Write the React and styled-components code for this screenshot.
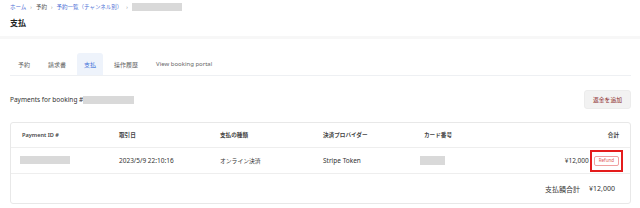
import React from 'react';
import styled, { createGlobalStyle } from 'styled-components';

const GlobalStyle = createGlobalStyle`
  body {
    margin: 0;
    background: #fff;
    color: #333;
    font-family: "Noto Sans", "Noto Sans CJK JP", sans-serif;
    font-size: 6.5px;
  }
`;

const Header = styled.header`
  height: 39px;
  padding: 3px 10px 0;
  box-sizing: border-box;
  border-bottom: 3px solid #f7f7f7;
`;

const Crumbs = styled.nav`
  display: flex;
  align-items: center;
  gap: 4px;
  height: 8px;
  font-size: 5.5px;
  color: #555;
`;

const Crumb = styled.a`
  color: ${p => (p.$link ? '#4f72d6' : '#555')};
  text-decoration: none;
`;

const Sep = styled.span`
  color: #888;
  font-size: 5px;
`;

const Masked = styled.span`
  display: inline-block;
  width: ${p => p.$w}px;
  height: ${p => p.$h || 8}px;
  background: #d9d9d9;
`;

const Title = styled.h1`
  margin: 7px 0 0;
  font-size: 8px;
  line-height: 10px;
  font-weight: 700;
  color: #222;
`;

const Main = styled.main`
  padding: 14px 9px 0 10px;
`;

const Tabs = styled.div`
  display: flex;
  gap: 4px;
  height: 22px;
  padding-left: 1px;
  border-bottom: 1px solid #eef0f3;
`;

const Tab = styled.div`
  display: flex;
  align-items: center;
  padding: 0 7px;
  font-size: 6px;
  color: ${p => (p.$active ? '#3a6fd8' : '#666')};
  background: ${p => (p.$active ? '#eef3fb' : 'transparent')};
  border-radius: 3px 3px 0 0;
`;

const Toolbar = styled.div`
  display: flex;
  align-items: center;
  justify-content: space-between;
  margin-top: 14px;
  height: 19px;
`;

const Heading = styled.div`
  display: flex;
  align-items: center;
  color: #333;
`;

const AddButton = styled.button`
  height: 19px;
  padding: 0 8px;
  border: 1px solid #ececec;
  border-radius: 3px;
  background: #f2f2f2;
  color: #8b2b2b;
  font-family: inherit;
  font-size: 5.8px;
`;

const Card = styled.div`
  margin-top: 13px;
  border: 1px solid #e8e8e8;
  border-radius: 3px;
`;

const Row = styled.div`
  display: grid;
  grid-template-columns: 97px 101px 103px 101px 1fr 40px;
  align-items: center;
  height: ${p => p.$h}px;
  padding: 0 11px;
  border-top: ${p => (p.$first ? 'none' : '1px solid #eeeeee')};
  color: ${p => (p.$head ? '#444' : '#333')};
  font-weight: ${p => (p.$head ? 600 : 400)};
  font-size: ${p => (p.$head ? '5.6px' : '6.5px')};
`;

const Cell = styled.div`
  text-align: ${p => (p.$right ? 'right' : 'left')};
  white-space: nowrap;
`;

const Jp = styled.span`
  font-size: 5.8px;
`;

const AmountCell = styled.div`
  grid-column: 5 / 7;
  display: flex;
  align-items: center;
  justify-content: flex-end;
`;

const Highlight = styled.span`
  display: inline-flex;
  align-items: center;
  margin-left: 1px;
  margin-right: -4px;
  padding: 6px 4px;
  outline: 2px solid #e41c1c;
  outline-offset: -2px;
`;

const RefundButton = styled.button`
  height: 10px;
  padding: 0 4px;
  border: 1px solid #f0a0a0;
  border-radius: 2px;
  background: #fff;
  color: #e05555;
  font-family: inherit;
  font-size: 4.5px;
  line-height: 1;
`;

const TotalCell = styled.div`
  grid-column: 1 / 7;
  display: flex;
  justify-content: flex-end;
  gap: 9px;
  padding-right: 4px;
  font-size: 7px;
`;

export default function App() {
  return (
    <>
      <GlobalStyle />
      <Header>
        <Crumbs>
          <Crumb $link href="#">ホーム</Crumb>
          <Sep>›</Sep>
          <Crumb>予約</Crumb>
          <Sep>›</Sep>
          <Crumb $link href="#">予約一覧（チャンネル別）</Crumb>
          <Sep>›</Sep>
          <Masked $w={50} />
        </Crumbs>
        <Title>支払</Title>
      </Header>
      <Main>
        <Tabs>
          <Tab>予約</Tab>
          <Tab>請求書</Tab>
          <Tab $active>支払</Tab>
          <Tab>操作履歴</Tab>
          <Tab>View booking portal</Tab>
        </Tabs>
        <Toolbar>
          <Heading>
            Payments for booking #<Masked $w={51} />
          </Heading>
          <AddButton>返金を追加</AddButton>
        </Toolbar>
        <Card>
          <Row $h={24} $first $head>
            <Cell>Payment ID #</Cell>
            <Cell>取引日</Cell>
            <Cell>支払の種類</Cell>
            <Cell>決済プロバイダー</Cell>
            <Cell>カード番号</Cell>
            <Cell $right>合計</Cell>
          </Row>
          <Row $h={25}>
            <Cell><Masked $w={50} style={{ marginLeft: -2 }} /></Cell>
            <Cell>2023/5/9 22:10:16</Cell>
            <Cell><Jp>オンライン決済</Jp></Cell>
            <Cell>Stripe Token</Cell>
            <AmountCell>
              <Masked $w={25} $h={9} style={{ marginRight: 'auto', marginLeft: -4 }} />
              ¥12,000
              <Highlight>
                <RefundButton>Refund</RefundButton>
              </Highlight>
            </AmountCell>
          </Row>
          <Row $h={29}>
            <TotalCell>
              <span>支払額合計</span>
              <span>¥12,000</span>
            </TotalCell>
          </Row>
        </Card>
      </Main>
    </>
  );
}
